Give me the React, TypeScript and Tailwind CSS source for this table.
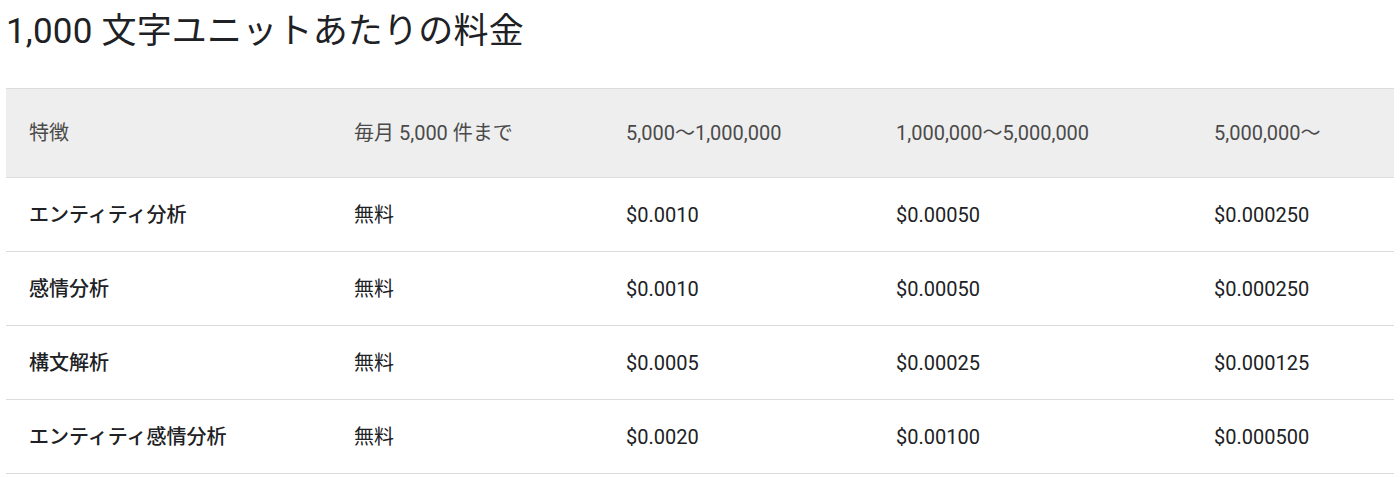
const rows = [
  { name: "エンティティ分析", free: "無料", a: "$0.0010", b: "$0.00050", c: "$0.000250" },
  { name: "感情分析", free: "無料", a: "$0.0010", b: "$0.00050", c: "$0.000250" },
  { name: "構文解析", free: "無料", a: "$0.0005", b: "$0.00025", c: "$0.000125" },
  { name: "エンティティ感情分析", free: "無料", a: "$0.0020", b: "$0.00100", c: "$0.000500" },
];

const cols = "grid grid-cols-[325px_272px_270px_318px_1fr] items-center";

export default function App() {
  return (
    <div
      className="min-h-screen bg-white px-[6px] pt-[8px] text-[#202124]"
      style={{ fontFamily: 'Roboto, "Noto Sans CJK JP", sans-serif' }}
    >
      <h1 className="text-[35px] font-normal leading-[48px] tracking-[0.2px]">1,000 文字ユニットあたりの料金</h1>

      <div className="mt-[32px] text-[20px] leading-[30px]">
        {/* header */}
        <div className={`${cols} h-[90px] border-y border-[#dadce0] bg-[#eeeeee] text-[#4a4a4a]`}>
          <div className="pl-[23px]">特徴</div>
          <div className="pl-[23px]">毎月 5,000 件まで</div>
          <div className="pl-[23px]">5,000〜1,000,000</div>
          <div className="pl-[23px]">1,000,000〜5,000,000</div>
          <div className="pl-[23px]">5,000,000〜</div>
        </div>

        {rows.map((r) => (
          <div key={r.name} className={`${cols} h-[74px] border-b border-[#dadce0]`}>
            <div className="pl-[23px] font-medium">{r.name}</div>
            <div className="pl-[23px]">{r.free}</div>
            <div className="pl-[23px]">{r.a}</div>
            <div className="pl-[23px]">{r.b}</div>
            <div className="pl-[23px]">{r.c}</div>
          </div>
        ))}
      </div>
    </div>
  );
}
